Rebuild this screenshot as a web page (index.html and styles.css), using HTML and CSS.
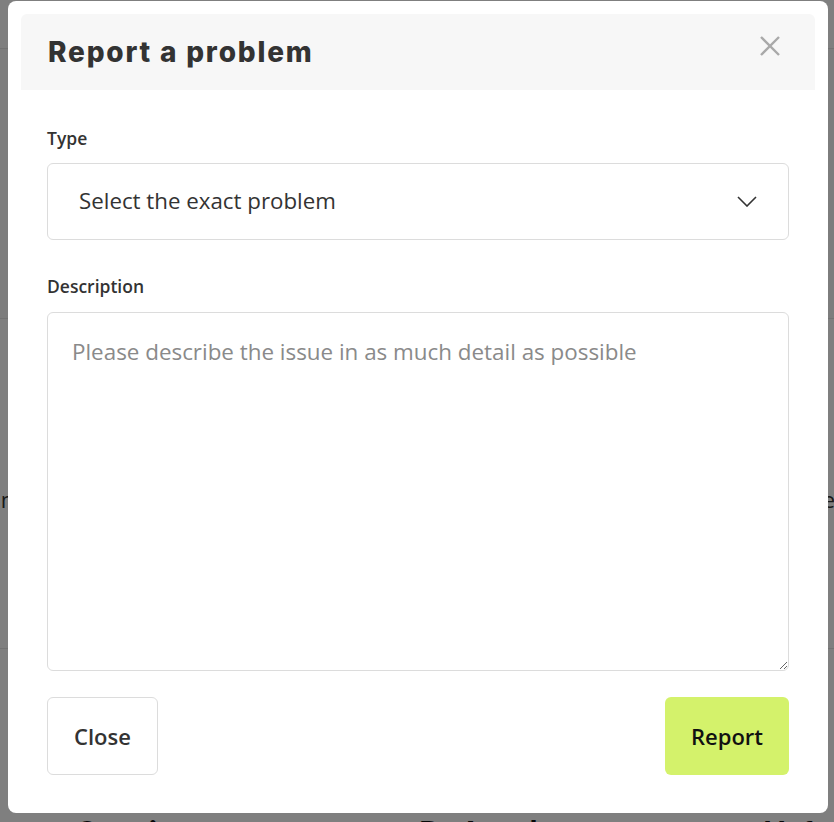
FILE: index.html
```html
<!DOCTYPE html>
<html lang="en">
	<head>
		<meta charset="UTF-8" />
		<meta
			name="viewport"
			content="width=device-width, initial-scale=1.0" />
		<title>Report a problem</title>
		<link rel="stylesheet" href="styles.css">
	</head>
	<body>
		<div class="page">
			<header class="topbar"></header>
			<section class="hero"></section>
			<section class="story">
				<p>Every piece is made by hand and each one of them has a little bit of the story that we want to tell to the world</p>
			</section>
			<section class="credits">
				<h2>Creation</h2>
				<h2>By Angel</h2>
				<h2>Hef</h2>
			</section>
		</div>

		<div class="overlay">
			<div class="modal">
				<div class="modal-header">
					<h1>Report a problem</h1>
					<button type="button" class="close-x" aria-label="Close">
						<svg width="20" height="20" viewBox="0 0 20 20">
							<path d="M1 1 L19 19 M19 1 L1 19" stroke="#a9a9a9" stroke-width="2.4" fill="none" />
						</svg>
					</button>
				</div>
				<form class="modal-body" id="report-form">
					<div class="field">
						<label for="type">Type</label>
						<div class="select-wrap">
							<select id="type">
								<option value="">Select the exact problem</option>
								<option value="broken">Something is broken</option>
								<option value="content">Wrong or missing content</option>
								<option value="other">Other</option>
							</select>
							<svg class="chevron" width="20" height="11" viewBox="0 0 20 11">
								<path d="M1 1 L10 10 L19 1" stroke="#333" stroke-width="1.6" fill="none" />
							</svg>
						</div>
					</div>
					<div class="field">
						<label for="description">Description</label>
						<textarea
							id="description"
							placeholder="Please describe the issue in as much detail as possible"></textarea>
					</div>
					<div class="modal-footer">
						<button type="button" class="btn btn-close">Close</button>
						<button type="submit" class="btn btn-report">Report</button>
					</div>
				</form>
			</div>
		</div>
	</body>
</html>
```

FILE: styles.css
```css
* {
	box-sizing: border-box;
}

body {
	margin: 0;
	font-family: "Open Sans", "Noto Sans", sans-serif;
	color: #333;
	background-color: #fff;
}

.page {
	height: 100vh;
	overflow: hidden;
}

.topbar {
	height: 49px;
	border-bottom: 1px solid #e6e6e6;
}

.hero {
	height: 270px;
	background-color: #fafafa;
	border-bottom: 1px solid #e6e6e6;
}

.story {
	height: 330px;
	display: flex;
	justify-content: center;
	align-items: center;
	padding-top: 30px;
	border-bottom: 1px solid #e6e6e6;
}

.story p {
	margin: 0;
	white-space: nowrap;
	font-size: 22px;
	color: #333;
}

.credits {
	display: flex;
	padding: 164px 0 0 75px;
}

.credits h2 {
	flex: 0 0 344px;
	margin: 0;
	font-family: Lato, sans-serif;
	font-size: 30px;
	font-weight: 900;
	color: #111;
}

.overlay {
	position: fixed;
	inset: 0;
	display: flex;
	align-items: flex-start;
	padding: 1px 0 0 8px;
	background-color: rgba(0, 0, 0, 0.5);
}

.modal {
	width: 820px;
	padding: 13px;
	background-color: #fff;
	border-radius: 8px;
}

.modal-header {
	display: flex;
	justify-content: space-between;
	align-items: center;
	height: 76px;
	padding: 0 35px 0 27px;
	background-color: #f7f7f7;
	border-radius: 6px 6px 0 0;
}

.modal-header h1 {
	margin: 0;
	font-family: Inter, sans-serif;
	font-size: 28px;
	font-weight: 800;
	letter-spacing: 1.8px;
	color: #333;
}

.close-x {
	display: flex;
	margin-bottom: 12px;
	padding: 0;
	border: none;
	background: none;
	cursor: pointer;
}

.modal-body {
	padding: 36px 26px 0;
}

.field {
	display: flex;
	flex-direction: column;
	margin-bottom: 34px;
}

.field:nth-child(2) {
	margin-bottom: 0;
}

.field label {
	margin-bottom: 13px;
	font-size: 17.5px;
	font-weight: 600;
	line-height: 24px;
	color: #333;
}

.field:nth-child(2) label {
	margin-bottom: 14px;
}

.select-wrap {
	position: relative;
}

.select-wrap select {
	width: 100%;
	height: 77px;
	padding: 0 60px 3px 31px;
	font-family: inherit;
	font-size: 22.3px;
	color: #333;
	background-color: #fff;
	border: 1px solid #dcdcdc;
	border-radius: 6px;
	appearance: none;
	-webkit-appearance: none;
}

.chevron {
	position: absolute;
	top: 33px;
	right: 32px;
	pointer-events: none;
}

.field textarea {
	height: 359px;
	padding: 24px;
	font-family: inherit;
	font-size: 22.4px;
	line-height: 30px;
	color: #333;
	border: 1px solid #dcdcdc;
	border-radius: 6px;
	resize: vertical;
}

.field textarea::placeholder {
	color: #8a8a8a;
}

.modal-footer {
	display: flex;
	justify-content: space-between;
	padding: 26px 0 25px;
}

.btn {
	height: 78px;
	padding: 0;
	font-family: inherit;
	font-size: 22px;
	font-weight: 600;
	border-radius: 6px;
	cursor: pointer;
}

.btn-close {
	width: 111px;
	color: #333;
	background-color: #fff;
	border: 1px solid #dcdcdc;
}

.btn-report {
	width: 124px;
	color: #111;
	background-color: #d4f26b;
	border: none;
}
```
